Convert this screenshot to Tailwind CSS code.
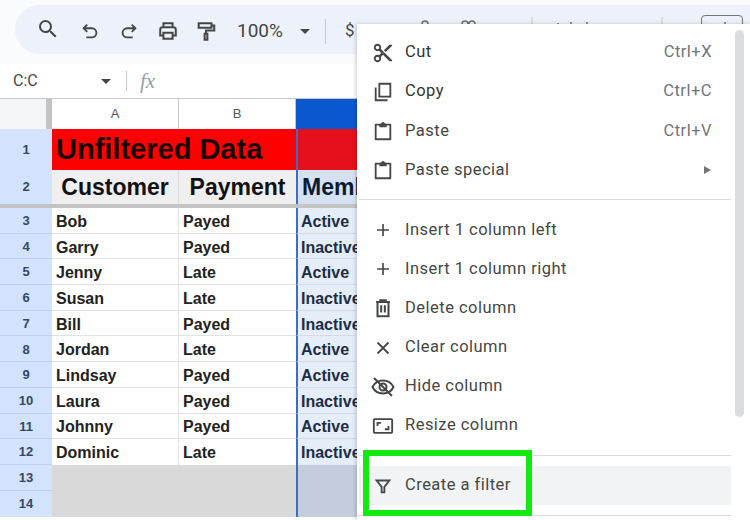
<!DOCTYPE html>
<html lang="en">
<head>
<meta charset="UTF-8">
<title>Sheets column menu</title>
<script src="https://cdn.jsdelivr.net/npm/@tailwindcss/browser@4"></script>
</head>
<body class="bg-white">
<div class="relative w-[750px] h-[520px] overflow-hidden bg-white font-['Roboto',sans-serif] text-[#444746]">

  <!-- toolbar -->
  <div class="h-[64px] bg-[#f9fbfd] pt-[5px] pl-[15px]">
    <div class="h-[49px] rounded-l-[25px] bg-[#edf2fa] flex items-center pl-[22px] pt-[3px] gap-[17px]">
      <svg class="w-[24px] h-[24px] -mt-[4px] -mx-[1px]" viewBox="0 0 24 24" fill="#444746"><path d="M15.5 14h-.79l-.28-.27A6.47 6.47 0 0 0 16 9.5 6.500 6.500 0 1 0 9.500 16c1.610 0 3.090-.59 4.230-1.570l.27.28v.79l5 4.990L20.490 19l-4.990-5zm-6 0C7.010 14 5 11.990 5 9.500S7.010 5 9.500 5 14 7.010 14 9.500 11.990 14 9.500 14z"/></svg>
      <svg class="w-[22px] h-[22px] ml-[3px]" viewBox="0 0 24 24" fill="none" stroke="#444746" stroke-width="2"><path d="M9 5 5 9l4 4M5 9h9a4.500 4.500 0 0 1 0 10H8"/></svg>
      <svg class="w-[22px] h-[22px]" viewBox="0 0 24 24" fill="none" stroke="#444746" stroke-width="2"><path d="m15 5 4 4-4 4M19 9h-9a4.500 4.500 0 0 0 0 10h6"/></svg>
      <svg class="w-[22px] h-[22px]" viewBox="0 0 24 24" fill="none" stroke="#444746" stroke-width="2.200"><path d="M7 8V3.500h10V8M7 17H3.500v-6.500a2.500 2.500 0 0 1 2.500-2.500h12a2.500 2.500 0 0 1 2.500 2.500V17H17M7 14h10v6.500H7z"/></svg>
      <svg class="w-[22px] h-[22px] -ml-[1px]" viewBox="0 0 24 24" fill="none" stroke="#444746" stroke-width="2.200"><path d="M4 3.500h14v5H4zM18 6h3v5.500h-9V15M10.500 15h3v6.500h-3z"/></svg>
      <span class="text-[19px] ml-[3px] w-[46px]">100%</span>
      <span class="w-0 h-0 border-x-[5px] border-t-[5px] border-x-transparent border-t-[#444746]"></span>
      <span class="w-px h-[25px] bg-[#c7c7c7] -ml-[2px]"></span>
      <span class="text-[17px] ml-[2px]">$</span>
    </div>
  </div>
  <!-- what shows of the toolbar above the menu -->
  <div class="absolute left-[701px] top-[15px] w-[42px] h-[14px] border border-[#747775] rounded-t-[4px]"></div>
  <svg class="absolute left-[400px] top-[15px] w-[350px] h-[10px]" viewBox="0 0 350 10" fill="none" stroke="#6b6f72" stroke-width="1.500">
    <path d="M22 9a3 3 0 0 1 6 0M62 9a3 3 0 0 1 6 0M69 9a3 3 0 0 1 6 0"/>
    <path d="M132 2v8" stroke="#c7c7c7" stroke-width="1"/>
    <path d="M262 2v8" stroke="#c7c7c7" stroke-width="1"/>
    <path d="M157 9h2M171 7v3M187 7v3M325 7v3"/>
  </svg>

  <!-- formula bar -->
  <div class="h-[35px] flex items-center bg-white border-b border-[#c4c7c5]">
    <span class="text-[16px] pl-[13px] w-[101px]">C:C</span>
    <span class="w-0 h-0 border-x-[5px] border-t-[5px] border-x-transparent border-t-[#444746]"></span>
    <span class="w-px h-[20px] bg-[#c7c7c7] ml-[15px]"></span>
    <span class="ml-[13px] text-[21px] leading-none italic text-[#9aa0a6] font-['Liberation_Serif',serif]">fx</span>
  </div>

  <!-- sheet -->
  <div class="grid grid-cols-[52px_127px_117px_1fr] grid-rows-[30px_41px_34px_4px_repeat(10,25.7px)_26px_26px] font-['Liberation_Sans',sans-serif]">
    <!-- headers -->
    <div class="bg-[#f4f5f6] border-r-[6px] border-[#c4c4c4]"></div>
    <div class="bg-white border-r border-[#c4c7c5] flex items-center justify-center text-[13px] text-[#555]">A</div>
    <div class="bg-white border-r border-[#c4c7c5] flex items-center justify-center text-[13px] text-[#555]">B</div>
    <div class="bg-[#0b57d0]"></div>

    <!-- row 1 -->
    <div class="bg-[#d3e3fd] flex items-center justify-center text-[13px] font-bold text-[#33476b]">1</div>
    <div class="col-span-2 bg-[#ff0000] flex items-center pl-[4px] text-[29px] font-bold text-[#1b0000] whitespace-nowrap">Unfiltered Data</div>
    <div class="bg-[#e5101b] border-l-2 border-[#3b6fc4]"></div>

    <!-- row 2 -->
    <div class="bg-[#d3e3fd] flex items-center justify-center text-[13px] font-bold text-[#33476b]">2</div>
    <div class="bg-[#efefef] border-r border-[#dadada] flex items-center justify-center text-[23px] font-bold text-[#111]">Customer</div>
    <div class="bg-[#efefef] flex items-center justify-center text-[23px] font-bold text-[#111]">Payment</div>
    <div class="bg-[#d5e0f0] border-l-2 border-[#3b6fc4] flex items-center pl-[4px] text-[23px] font-bold text-[#0a1a33] overflow-hidden whitespace-nowrap">Membership</div>

    <!-- frozen row divider -->
    <div class="bg-[#c4c4c4] col-span-4"></div>

    <!-- data rows -->
    <div class="bg-[#d3e3fd] border-b border-[#c2d2ea] pt-[1px] flex items-center justify-center text-[13px] font-bold text-[#33476b]">3</div><div class="bg-white border-r border-b border-[#e1e1e1] pt-[3px] flex items-center pl-[4px] text-[16px] font-bold text-[#222]">Bob</div><div class="bg-white border-b border-[#e1e1e1] pt-[3px] flex items-center pl-[4px] text-[16px] font-bold text-[#222]">Payed</div><div class="bg-[#e5edf9] border-l-2 border-b border-l-[#3b6fc4] border-b-[#d5dce8] pt-[3px] flex items-center pl-[3px] text-[16px] font-bold text-[#1c2c45]">Active</div>
    <div class="bg-[#d3e3fd] border-b border-[#c2d2ea] pt-[1px] flex items-center justify-center text-[13px] font-bold text-[#33476b]">4</div><div class="bg-white border-r border-b border-[#e1e1e1] pt-[3px] flex items-center pl-[4px] text-[16px] font-bold text-[#222]">Garry</div><div class="bg-white border-b border-[#e1e1e1] pt-[3px] flex items-center pl-[4px] text-[16px] font-bold text-[#222]">Payed</div><div class="bg-[#e5edf9] border-l-2 border-b border-l-[#3b6fc4] border-b-[#d5dce8] pt-[3px] flex items-center pl-[3px] text-[16px] font-bold text-[#1c2c45]">Inactive</div>
    <div class="bg-[#d3e3fd] border-b border-[#c2d2ea] pt-[1px] flex items-center justify-center text-[13px] font-bold text-[#33476b]">5</div><div class="bg-white border-r border-b border-[#e1e1e1] pt-[3px] flex items-center pl-[4px] text-[16px] font-bold text-[#222]">Jenny</div><div class="bg-white border-b border-[#e1e1e1] pt-[3px] flex items-center pl-[4px] text-[16px] font-bold text-[#222]">Late</div><div class="bg-[#e5edf9] border-l-2 border-b border-l-[#3b6fc4] border-b-[#d5dce8] pt-[3px] flex items-center pl-[3px] text-[16px] font-bold text-[#1c2c45]">Active</div>
    <div class="bg-[#d3e3fd] border-b border-[#c2d2ea] pt-[1px] flex items-center justify-center text-[13px] font-bold text-[#33476b]">6</div><div class="bg-white border-r border-b border-[#e1e1e1] pt-[3px] flex items-center pl-[4px] text-[16px] font-bold text-[#222]">Susan</div><div class="bg-white border-b border-[#e1e1e1] pt-[3px] flex items-center pl-[4px] text-[16px] font-bold text-[#222]">Late</div><div class="bg-[#e5edf9] border-l-2 border-b border-l-[#3b6fc4] border-b-[#d5dce8] pt-[3px] flex items-center pl-[3px] text-[16px] font-bold text-[#1c2c45]">Inactive</div>
    <div class="bg-[#d3e3fd] border-b border-[#c2d2ea] pt-[1px] flex items-center justify-center text-[13px] font-bold text-[#33476b]">7</div><div class="bg-white border-r border-b border-[#e1e1e1] pt-[3px] flex items-center pl-[4px] text-[16px] font-bold text-[#222]">Bill</div><div class="bg-white border-b border-[#e1e1e1] pt-[3px] flex items-center pl-[4px] text-[16px] font-bold text-[#222]">Payed</div><div class="bg-[#e5edf9] border-l-2 border-b border-l-[#3b6fc4] border-b-[#d5dce8] pt-[3px] flex items-center pl-[3px] text-[16px] font-bold text-[#1c2c45]">Inactive</div>
    <div class="bg-[#d3e3fd] border-b border-[#c2d2ea] pt-[1px] flex items-center justify-center text-[13px] font-bold text-[#33476b]">8</div><div class="bg-white border-r border-b border-[#e1e1e1] pt-[3px] flex items-center pl-[4px] text-[16px] font-bold text-[#222]">Jordan</div><div class="bg-white border-b border-[#e1e1e1] pt-[3px] flex items-center pl-[4px] text-[16px] font-bold text-[#222]">Late</div><div class="bg-[#e5edf9] border-l-2 border-b border-l-[#3b6fc4] border-b-[#d5dce8] pt-[3px] flex items-center pl-[3px] text-[16px] font-bold text-[#1c2c45]">Active</div>
    <div class="bg-[#d3e3fd] border-b border-[#c2d2ea] pt-[1px] flex items-center justify-center text-[13px] font-bold text-[#33476b]">9</div><div class="bg-white border-r border-b border-[#e1e1e1] pt-[3px] flex items-center pl-[4px] text-[16px] font-bold text-[#222]">Lindsay</div><div class="bg-white border-b border-[#e1e1e1] pt-[3px] flex items-center pl-[4px] text-[16px] font-bold text-[#222]">Payed</div><div class="bg-[#e5edf9] border-l-2 border-b border-l-[#3b6fc4] border-b-[#d5dce8] pt-[3px] flex items-center pl-[3px] text-[16px] font-bold text-[#1c2c45]">Active</div>
    <div class="bg-[#d3e3fd] border-b border-[#c2d2ea] pt-[1px] flex items-center justify-center text-[13px] font-bold text-[#33476b]">10</div><div class="bg-white border-r border-b border-[#e1e1e1] pt-[3px] flex items-center pl-[4px] text-[16px] font-bold text-[#222]">Laura</div><div class="bg-white border-b border-[#e1e1e1] pt-[3px] flex items-center pl-[4px] text-[16px] font-bold text-[#222]">Payed</div><div class="bg-[#e5edf9] border-l-2 border-b border-l-[#3b6fc4] border-b-[#d5dce8] pt-[3px] flex items-center pl-[3px] text-[16px] font-bold text-[#1c2c45]">Inactive</div>
    <div class="bg-[#d3e3fd] border-b border-[#c2d2ea] pt-[1px] flex items-center justify-center text-[13px] font-bold text-[#33476b]">11</div><div class="bg-white border-r border-b border-[#e1e1e1] pt-[3px] flex items-center pl-[4px] text-[16px] font-bold text-[#222]">Johnny</div><div class="bg-white border-b border-[#e1e1e1] pt-[3px] flex items-center pl-[4px] text-[16px] font-bold text-[#222]">Payed</div><div class="bg-[#e5edf9] border-l-2 border-b border-l-[#3b6fc4] border-b-[#d5dce8] pt-[3px] flex items-center pl-[3px] text-[16px] font-bold text-[#1c2c45]">Active</div>
    <div class="bg-[#d3e3fd] border-b border-[#c2d2ea] pt-[1px] flex items-center justify-center text-[13px] font-bold text-[#33476b]">12</div><div class="bg-white border-r border-[#e1e1e1] pt-[2px] flex items-center pl-[4px] text-[16px] font-bold text-[#222]">Dominic</div><div class="bg-white pt-[2px] flex items-center pl-[4px] text-[16px] font-bold text-[#222]">Late</div><div class="bg-[#e5edf9] border-l-2 border-l-[#3b6fc4] pt-[2px] flex items-center pl-[3px] text-[16px] font-bold text-[#1c2c45]">Inactive</div>

    <!-- empty rows -->
    <div class="bg-[#d3e3fd] border-b border-[#c2d2ea] flex items-center justify-center text-[13px] font-bold text-[#33476b]">13</div><div class="col-span-2 row-span-2 bg-[#d9d9d9]"></div><div class="row-span-2 bg-[#c3cddc] border-l-2 border-[#3b6fc4]"></div>
    <div class="bg-[#d3e3fd] flex items-center justify-center text-[13px] font-bold text-[#33476b]">14</div>
  </div>

  <!-- context menu -->
  <div class="absolute left-[357px] top-[24px] right-0 bottom-0 bg-white pt-[9px] pl-[2px] pr-[19px] shadow-[-1px_0_4px_rgba(0,0,0,0.2)] text-[16.5px] tracking-[0.48px]">
    <div class="flex items-center h-[39.200px]">
      <svg class="w-[22px] h-[22px] ml-[13px] mr-[11px] shrink-0" viewBox="0 0 24 24" fill="#444746"><path d="M9.640 7.640c.23-.5.36-1.050.36-1.640 0-2.210-1.790-4-4-4S2 3.790 2 6s1.790 4 4 4c.59 0 1.140-.13 1.640-.36L10 12l-2.360 2.360C7.140 14.130 6.590 14 6 14c-2.210 0-4 1.790-4 4s1.790 4 4 4 4-1.790 4-4c0-.59-.13-1.140-.36-1.640L12 14l7 7h3v-1L9.640 7.640zM6 8a2 2 0 1 1 0-4 2 2 0 0 1 0 4zm0 12a2 2 0 1 1 0-4 2 2 0 0 1 0 4zm6-7.500a.5.5 0 1 1 0-1 .5.5 0 0 1 0 1zM19 3l-6 6 2 2 7-7V3h-3z"/></svg>
      <span class="text-[#333]">Cut</span><span class="ml-auto mr-[19px] text-[#70757a]">Ctrl+X</span>
    </div>
    <div class="flex items-center h-[39.200px]">
      <svg class="w-[22px] h-[22px] ml-[13px] mr-[11px] shrink-0" viewBox="0 0 24 24" fill="none" stroke="#444746" stroke-width="2"><path d="M8 3h12v14H8zM4 7v14h13"/></svg>
      <span class="text-[#333]">Copy</span><span class="ml-auto mr-[19px] text-[#70757a]">Ctrl+C</span>
    </div>
    <div class="flex items-center h-[39.200px]">
      <svg class="w-[22px] h-[22px] ml-[13px] mr-[11px] shrink-0" viewBox="0 0 24 24" fill="#444746"><path d="M4 4h4.500l1.500-.5L12 2l2 1.500 1.500.5H20a1 1 0 0 1 1 1v16a1 1 0 0 1-1 1H4a1 1 0 0 1-1-1V5a1 1 0 0 1 1-1zm1 2v14h14V6h-3v2H8V6H5z"/></svg>
      <span class="text-[#444]">Paste</span><span class="ml-auto mr-[19px] text-[#70757a]">Ctrl+V</span>
    </div>
    <div class="flex items-center h-[39.200px]">
      <svg class="w-[22px] h-[22px] ml-[13px] mr-[11px] shrink-0" viewBox="0 0 24 24" fill="#444746"><path d="M4 4h4.500l1.500-.5L12 2l2 1.500 1.500.5H20a1 1 0 0 1 1 1v16a1 1 0 0 1-1 1H4a1 1 0 0 1-1-1V5a1 1 0 0 1 1-1zm1 2v14h14V6h-3v2H8V6H5z"/></svg>
      <span class="text-[#444]">Paste special</span>
      <span class="ml-auto mr-[20px] w-0 h-0 border-y-[4.500px] border-l-[7px] border-y-transparent border-l-[#70757a]"></span>
    </div>

    <div class="h-px bg-[#dadce0] mt-[9px] mb-[11px]"></div>

    <div class="flex items-center h-[39.100px]">
      <svg class="w-[22px] h-[22px] ml-[13px] mr-[11px] shrink-0" viewBox="0 0 24 24" fill="none" stroke="#444746" stroke-width="1.800"><path d="M12 5.500v13M5.500 12h13"/></svg>
      <span>Insert 1 column left</span>
    </div>
    <div class="flex items-center h-[39.100px]">
      <svg class="w-[22px] h-[22px] ml-[13px] mr-[11px] shrink-0" viewBox="0 0 24 24" fill="none" stroke="#444746" stroke-width="1.800"><path d="M12 5.500v13M5.500 12h13"/></svg>
      <span>Insert 1 column right</span>
    </div>
    <div class="flex items-center h-[39.100px]">
      <svg class="w-[22px] h-[22px] ml-[13px] mr-[11px] shrink-0" viewBox="0 0 24 24" fill="none" stroke="#444746" stroke-width="2.200"><path d="M4.500 5.500h15M9 5.500V3.500h6v2M6 5.500V21h12V5.500M10 9v8M14 9v8"/></svg>
      <span>Delete column</span>
    </div>
    <div class="flex items-center h-[39.100px]">
      <svg class="w-[22px] h-[22px] ml-[13px] mr-[11px] shrink-0" viewBox="0 0 24 24" fill="none" stroke="#444746" stroke-width="2"><path d="m6 6 12 12M18 6 6 18"/></svg>
      <span>Clear column</span>
    </div>
    <div class="flex items-center h-[39.100px]">
      <svg class="w-[24px] h-[24px] ml-[12px] mr-[10px] shrink-0" viewBox="0 0 24 24" fill="none" stroke="#444746" stroke-width="2"><path d="M1.500 12C3.500 8 7.500 5.500 12 5.500S20.500 8 22.500 12c-2 4-6 6.500-10.500 6.500S3.500 16 1.500 12z"/><circle cx="12" cy="12" r="3.500"/><path d="m3 3 18 18"/></svg>
      <span>Hide column</span>
    </div>
    <div class="flex items-center h-[39.100px]">
      <svg class="w-[22px] h-[22px] ml-[13px] mr-[11px] shrink-0" viewBox="0 0 24 24" fill="none" stroke="#444746" stroke-width="2"><rect x="2" y="4.500" width="20" height="15" rx="1"/><path d="M6 12V8.500h4M18 12v3.500h-4"/></svg>
      <span>Resize column</span>
    </div>

    <div class="h-px bg-[#dadce0] mt-[10px] mb-[10px]"></div>

    <div class="flex items-center h-[39px] bg-[#f1f3f4]">
      <svg class="w-[22px] h-[22px] ml-[13px] mr-[11px] shrink-0" viewBox="0 0 24 24" fill="none" stroke="#444746" stroke-width="2"><path d="M5 6h14l-5.500 7v6h-3v-6z"/></svg>
      <span>Create a filter</span>
    </div>
    <div class="h-px bg-[#dadce0] mt-[10px]"></div>

    <!-- scrollbar -->
    <div class="absolute left-[378px] top-[6px] w-[9px] h-[387px] rounded-full bg-[#dadce0]"></div>
    <!-- green highlight box drawn on the screenshot -->
    <div class="absolute left-[6px] top-[426px] w-[169px] h-[66px] border-[6px] border-[#12ea12]"></div>
  </div>
</div>
</body>
</html>
